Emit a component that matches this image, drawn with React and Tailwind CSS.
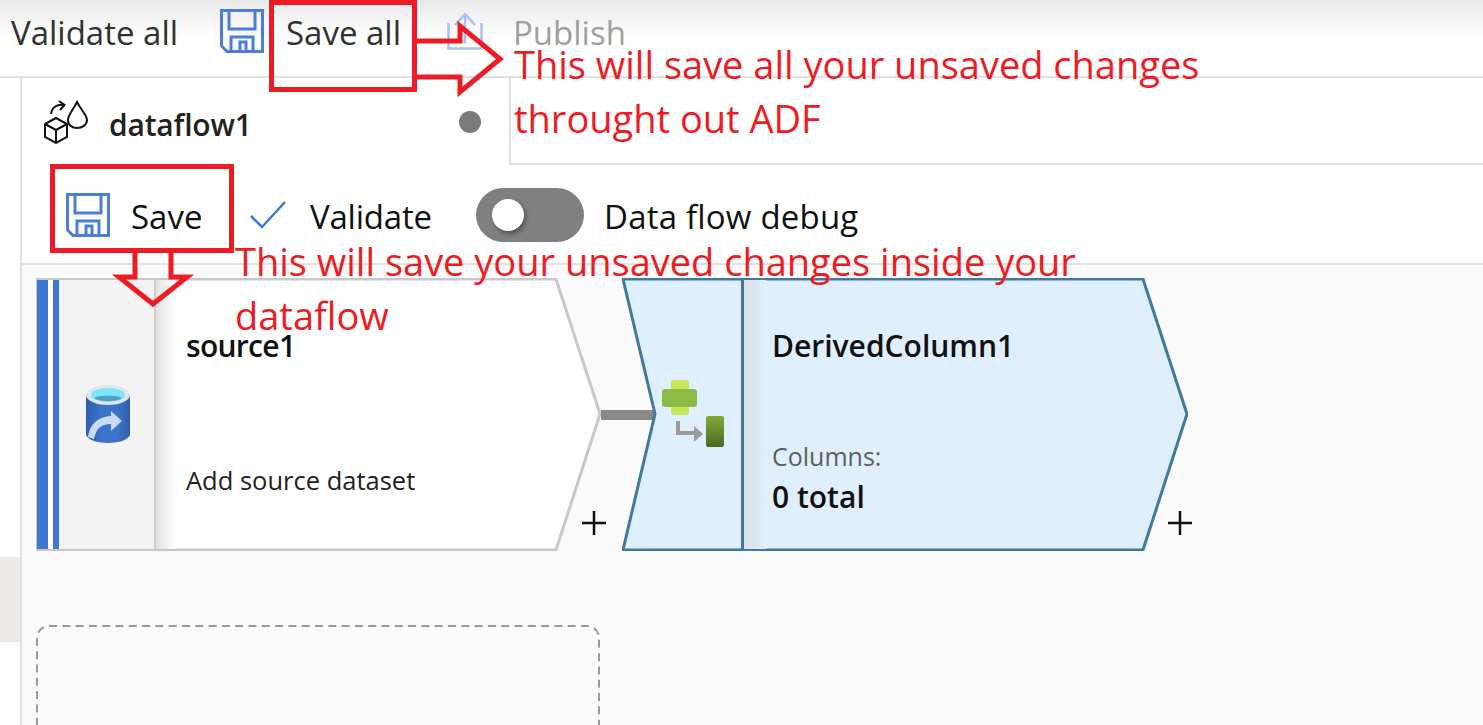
import React from 'react';

const font = { fontFamily: '"Open Sans", "Noto Sans", sans-serif' };

function SaveIcon({ className }) {
  return (
    <svg className={className} viewBox="0 0 44 44" fill="none" stroke="#4a7fd4" strokeWidth="3">
      <path d="M1.5 1.5H42.5V42.5H7L1.5 37Z" />
      <path d="M9 1.5V20H35V1.5" />
      <path d="M11 42.5V28H33V42.5" />
      <path d="M20 42.5V33H26V42.5" />
    </svg>
  );
}

function PublishIcon({ className }) {
  return (
    <svg className={className} viewBox="0 0 36 38" fill="none" stroke="#a9c0ef" strokeWidth="2.5">
      <path d="M1.5 11V36.5H34.5V11" />
      <path d="M18 31V3" />
      <path d="M8 13L18 2L28 13" />
    </svg>
  );
}

function DataflowIcon({ className }) {
  return (
    <svg className={className} viewBox="0 0 44 44" fill="none" stroke="#111" strokeWidth="2">
      <path d="M1 24L12 18L23 24V37L12 43L1 37Z" />
      <path d="M1 24L12 30L23 24M12 30V43" />
      <path d="M33 2C29 10 24 15 24 20C24 25 28 28 33 28C38 28 43 25 43 20C43 15 37 10 33 2Z" />
      <path d="M7 14C8 7 13 4 20 5" />
      <path d="M15 1L20.5 5L16 10" />
    </svg>
  );
}

function DbIcon({ className }) {
  return (
    <svg className={className} viewBox="0 0 44 58">
      <defs>
        <linearGradient id="dbBody" x1="0" x2="1" y1="0" y2="0">
          <stop offset="0" stopColor="#2d5ea8" />
          <stop offset="0.35" stopColor="#3c74cb" />
          <stop offset="0.7" stopColor="#3c74cb" />
          <stop offset="1" stopColor="#2d5ea8" />
        </linearGradient>
      </defs>
      <path d="M0 10V49C0 54 10 58 22 58C34 58 44 54 44 49V10Z" fill="url(#dbBody)" />
      <ellipse cx="22" cy="10" rx="22" ry="10" fill="#dfe6ea" />
      <ellipse cx="22" cy="10" rx="17" ry="7" fill="#7fe3fb" />
      <path d="M8 13C12 10 32 10 36 13C32 17 12 17 8 13Z" fill="#4f9cc4" />
      <path d="M2 52C4 38 12 32 25 31V26L36 36L25 46V39C15 39 10 44 8 54Z" fill="#c6dcf3" />
    </svg>
  );
}

function DerivedIcon({ className }) {
  return (
    <svg className={className} viewBox="0 0 62 67">
      <defs>
        <linearGradient id="greenBar" x1="0" x2="0" y1="0" y2="1">
          <stop offset="0" stopColor="#7dab3c" />
          <stop offset="1" stopColor="#4c691f" />
        </linearGradient>
      </defs>
      <rect x="9" y="0" width="18" height="35" rx="3" fill="#c5e85a" />
      <rect x="0" y="9" width="35" height="18" rx="3" fill="#8bbb45" />
      <path d="M16 41V53H33" fill="none" stroke="#9b9b9b" strokeWidth="4" />
      <path d="M32 46L41 54L32 62Z" fill="#9b9b9b" />
      <rect x="44" y="36" width="18" height="31" rx="2" fill="url(#greenBar)" />
    </svg>
  );
}

function Plus({ className }) {
  return (
    <svg className={className} viewBox="0 0 24 24" stroke="#111" strokeWidth="2.5">
      <path d="M0 12H24M12 0V24" />
    </svg>
  );
}

function SourceNode() {
  return (
    <div className="absolute left-[14px] top-[13px] w-[566px] h-[273px]">
      <svg className="absolute inset-0 w-full h-full" viewBox="0 0 566 273" fill="#fff" stroke="#c8c8c8" strokeWidth="3">
        <path d="M1 1H520L564 136L520 272H1Z" />
      </svg>
      <div className="relative flex h-full py-[2px] pl-[1px]">
        <div className="w-[11px] bg-[#3f78d0]" />
        <div className="w-[5px] bg-white" />
        <div className="w-[6px] bg-[#3f78d0]" />
        <div className="w-[97px] bg-[#f3f3f3] border-r-2 border-[#cccccc] flex items-center justify-center pl-[3px]">
          <DbIcon className="w-[44px] h-[58px] mb-[1px]" />
        </div>
        <div className="w-[20px] bg-gradient-to-r from-[#e2e2e2] to-white" />
        <div className="flex flex-col pl-[10px]">
          <div className="mt-[46px] text-[30px] leading-[40px] font-semibold text-[#111] tracking-[-0.7px]">source1</div>
          <div className="mt-[94px] text-[25.5px] leading-[40px] text-[#222]">Add source dataset</div>
        </div>
      </div>
      <Plus className="absolute left-[546px] top-[233px] w-[24px] h-[24px]" />
    </div>
  );
}

function DerivedNode() {
  return (
    <div className="absolute left-[600px] top-[13px] w-[566px] h-[273px]">
      <svg className="absolute inset-0 w-full h-full" viewBox="0 0 566 273" fill="#e0effe" stroke="#3f7a9e" strokeWidth="3">
        <path d="M1 1H521L565 136L521 272H1L33 136Z" />
      </svg>
      <div className="absolute left-[40px] top-[102px]">
        <DerivedIcon className="w-[62px] h-[67px]" />
      </div>
      <div className="absolute left-[119px] top-0 h-full w-[3px] bg-[#3f7a9e]" />
      <div className="absolute left-[122px] top-[2px] bottom-[2px] w-[22px] bg-gradient-to-r from-[#dcdfe4] to-[#e0effe]" />
      <div className="absolute left-[150px] top-0 flex flex-col">
        <div className="mt-[48px] text-[30px] leading-[40px] font-semibold text-[#111]">DerivedColumn1</div>
        <div className="mt-[74px] text-[25px] leading-[32px] text-[#605e5c]">Columns:</div>
        <div className="mt-[5px] text-[30px] leading-[40px] font-semibold text-[#111]">0 total</div>
      </div>
      <Plus className="absolute left-[546px] top-[233px] w-[24px] h-[24px]" />
    </div>
  );
}

function Annotations() {
  return (
    <div className="absolute inset-0 pointer-events-none">
      <div className="absolute left-[269px] top-0 w-[148px] h-[92px] border-[5px] border-[#ed1c24]" />
      <div className="absolute left-[50px] top-[164px] w-[184px] h-[89px] border-[5px] border-[#ed1c24]" />
      <svg className="absolute inset-0 w-full h-full" fill="none" stroke="#ed1c24" strokeWidth="5">
        <path d="M415 41H460V26L500 59L460 92V77H415" />
        <path d="M135 252V277H119L153 304L187 277H171V252" />
      </svg>
      <div className="absolute left-[514px] top-[37px] text-[38px] leading-[54px] text-[#ed1c24] whitespace-nowrap">
        <div>This will save all your unsaved changes</div>
        <div>throught out ADF</div>
      </div>
      <div className="absolute left-[235px] top-[234px] text-[38px] leading-[54px] text-[#ed1c24] whitespace-nowrap">
        <div>This will save your unsaved changes inside your</div>
        <div>dataflow</div>
      </div>
    </div>
  );
}

export default function App() {
  return (
    <div className="relative h-screen w-full overflow-hidden bg-white flex flex-col" style={font}>
      {/* Top command bar */}
      <div className="h-[78px] shrink-0 border-b-2 border-[#e1e1e1] bg-gradient-to-b from-[#e9e9e9] via-white to-white flex items-start pl-[11px] pt-[9px]">
        <div className="mt-[1px] text-[33px] leading-[46px] text-[#323130] w-[209px] whitespace-nowrap">Validate all</div>
        <SaveIcon className="w-[44px] h-[44px]" />
        <div className="mt-[1px] ml-[22px] w-[161px] text-[33px] leading-[46px] text-[#323130] whitespace-nowrap">Save all</div>
        <PublishIcon className="w-[36px] h-[38px] mt-[3px]" />
        <div className="mt-[1px] ml-[30px] text-[33px] leading-[46px] text-[#a19f9d] whitespace-nowrap">Publish</div>
      </div>

      <div className="flex-1 flex min-h-0">
        {/* Left strip */}
        <div className="w-[22px] shrink-0 border-r-2 border-[#e1e1e1] pt-[479px]">
          <div className="h-[85px] bg-[#ecebe9]" />
        </div>

        <div className="flex-1 flex flex-col min-w-0">
          {/* Tab row */}
          <div className="h-[87px] shrink-0 flex">
            <div className="w-[487px] flex items-center pl-[22px]">
              <DataflowIcon className="w-[44px] h-[44px]" />
              <div className="mt-[7px] ml-[21px] w-[141px] text-[30px] leading-[40px] font-semibold text-[#222] tracking-[-0.2px] whitespace-nowrap">dataflow1</div>
              <div className="mt-[1px] ml-[209px] w-[22px] h-[22px] rounded-full bg-[#7a7a7a]" />
            </div>
            <div className="flex-1 border-l-2 border-b-2 border-[#e1e1e1]" />
          </div>

          {/* Dataflow toolbar */}
          <div className="h-[100px] shrink-0 border-b-2 border-[#e1e1e1] flex items-center pl-[44px] pt-[2px]">
            <SaveIcon className="w-[44px] h-[44px]" />
            <div className="mt-[4px] ml-[21px] w-[119px] text-[33px] leading-[46px] text-[#111]">Save</div>
            <svg className="w-[36px] h-[28px]" viewBox="0 0 36 28" fill="none" stroke="#3f78d0" strokeWidth="2.5">
              <path d="M1 15L12 26L35 1" />
            </svg>
            <div className="mt-[4px] ml-[24px] w-[166px] text-[33px] leading-[46px] text-[#111] tracking-[-0.2px]">Validate</div>
            <div className="w-[108px] h-[54px] rounded-full bg-[#808080] flex items-center pl-[16px]">
              <div className="w-[32px] h-[32px] rounded-full bg-white shadow-[2px_3px_4px_rgba(0,0,0,0.35)]" />
            </div>
            <div className="mt-[3px] ml-[20px] text-[33px] leading-[46px] text-[#111] tracking-[0.2px] whitespace-nowrap">Data flow debug</div>
          </div>

          {/* Canvas */}
          <div className="relative flex-1 bg-[#fafafa]">
            <SourceNode />
            <svg className="absolute left-[579px] top-[145px] w-[54px] h-[10px]">
              <rect width="54" height="10" fill="#8a8886" />
            </svg>
            <DerivedNode />
            <svg className="absolute left-[14px] top-[360px] w-[564px] h-[120px]" fill="none" stroke="#999" strokeWidth="2">
              <rect x="1" y="1" width="562" height="200" rx="12" strokeDasharray="8 5.3" />
            </svg>
          </div>
        </div>
      </div>

      <Annotations />
    </div>
  );
}
